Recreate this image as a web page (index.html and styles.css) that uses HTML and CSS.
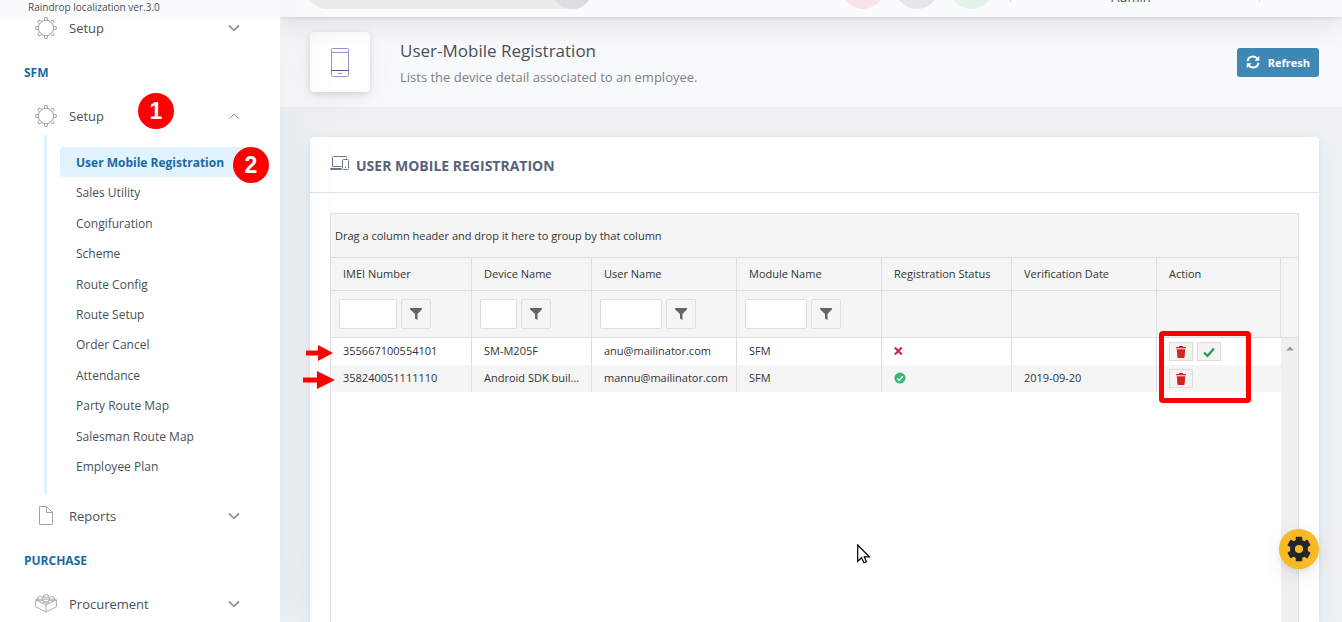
FILE: index.html
```html
<!DOCTYPE html>
<html lang="en">
<head>
<meta charset="utf-8">
<meta name="viewport" content="width=device-width, initial-scale=1">
<title>User-Mobile Registration</title>
<link rel="stylesheet" href="styles.css">
</head>
<body>
<svg class="defs" aria-hidden="true">
  <symbol id="gear-line" viewBox="0 0 22 22">
    <g fill="none" stroke="currentColor">
      <circle cx="11" cy="11" r="7.7"/>
      <path d="M9.6 3.4V.7h2.8v2.7M9.6 18.6v2.7h2.8v-2.7M3.4 9.6H.7v2.8h2.7M18.6 9.6h2.7v2.8h-2.7"/>
      <path d="M4.6 6.7 3.2 5.3l.1-1.7 1.8-.2 1.5 1.3M17.4 6.7l1.4-1.4-.1-1.7-1.8-.2-1.5 1.3M4.6 15.3l-1.4 1.4.1 1.7 1.8.2 1.5-1.3M17.4 15.3l1.4 1.4-.1 1.7-1.8.2-1.5-1.3"/>
    </g>
  </symbol>
  <symbol id="chevron" viewBox="0 0 12 8"><path d="M1 1.5 6 6.3l5-4.8" fill="none" stroke="currentColor" stroke-width="1.8"/></symbol>
  <symbol id="chevron-up" viewBox="0 0 12 8"><path d="M1.5 6.5 6 2l4.5 4.5" fill="none" stroke="currentColor"/></symbol>
  <symbol id="funnel" viewBox="0 0 14 14"><path d="M1 1h12v1.2L8.5 7v6L6 11.6V7L1 2.2z" fill="currentColor"/></symbol>
  <symbol id="trash" viewBox="0 0 12 12"><path d="M1 1h3V0h4v1h3v1.3H1zM1.8 3.2h8.4L9.6 11q-.1 1-1 1H3.400q-.9 0-1-1z" fill="currentColor"/></symbol>
</svg>
<div class="app">
  <aside class="sidebar">
    <div class="version">Raindrop localization ver.3.0</div>
    <nav class="nav">
      <a class="nav-row" href="#"><svg class="nav-icon"><use href="#gear-line"/></svg><span>Setup</span><svg class="caret"><use href="#chevron"/></svg></a>
      <h2 class="nav-heading">SFM</h2>
      <a class="nav-row" href="#"><svg class="nav-icon"><use href="#gear-line"/></svg><span>Setup</span><svg class="caret"><use href="#chevron-up"/></svg></a>
      <ul class="submenu">
        <li><a class="active" href="#">User Mobile Registration</a></li>
        <li><a href="#">Sales Utility</a></li>
        <li><a href="#">Congifuration</a></li>
        <li><a href="#">Scheme</a></li>
        <li><a href="#">Route Config</a></li>
        <li><a href="#">Route Setup</a></li>
        <li><a href="#">Order Cancel</a></li>
        <li><a href="#">Attendance</a></li>
        <li><a href="#">Party Route Map</a></li>
        <li><a href="#">Salesman Route Map</a></li>
        <li><a href="#">Employee Plan</a></li>
      </ul>
      <a class="nav-row" href="#"><svg class="nav-icon" viewBox="0 0 22 22"><path d="M4.500 1.500h7l6 6v12h-13zM11.500 1.500v6h6" fill="none" stroke="currentColor"/></svg><span>Reports</span><svg class="caret"><use href="#chevron"/></svg></a>
      <h2 class="nav-heading">PURCHASE</h2>
      <a class="nav-row" href="#"><svg class="nav-icon" viewBox="0 0 22 22"><g fill="none" stroke="currentColor" stroke-width=".9"><path d="M.6 6.800v7L11 19l10.400-5.200v-7L11 12zM11 12v7M.6 6.800l2-1M21.400 6.800l-2-1"/><ellipse cx="11" cy="3" rx="2.700" ry="1.400"/><ellipse cx="5.300" cy="5" rx="2.700" ry="1.400"/><ellipse cx="16.700" cy="5" rx="2.700" ry="1.400"/><ellipse cx="11" cy="7.500" rx="2.700" ry="1.400"/><path d="M8.300 3v1.700M13.700 3v1.700M2.600 5v2q2.500 2 5.400 0V5M14 5v2q2.900 2 5.400 0V5M8.300 7.500v2q2.700 1.600 5.400 0v-2"/></g></svg><span>Procurement</span><svg class="caret"><use href="#chevron"/></svg></a>
    </nav>
  </aside>

  <div class="content">
    <header class="topbar">
      <div class="search"><span class="search-knob"></span></div>
      <div class="dots"><span class="dot pink"></span><span class="dot grey"></span><span class="dot green"></span></div>
      <div class="account">Admin</div>
    </header>

    <section class="page-title">
      <div class="title-icon"><svg width="20" height="32" viewBox="0 0 20 32" fill="none" stroke="#9a90cc"><rect x="1.500" y="2.500" width="17" height="28" rx="1"/><path d="M1.500 6.500h17M8 27.500h4"/><path d="M1.500 24.500h17" stroke="#5d4c92"/></svg></div>
      <div class="title-text">
        <h1>User-Mobile Registration</h1>
        <p>Lists the device detail associated to an employee.</p>
      </div>
      <button class="refresh" type="button"><svg width="14" height="14" viewBox="0 0 14 14"><g fill="none" stroke="#fff" stroke-width="2"><path d="M1.500 6.200A5.500 5.500 0 0 1 11.300 3.600M12.500 7.800A5.500 5.500 0 0 1 2.700 10.400"/></g><path d="M13.300.8v5H8.500zM.7 13.200v-5h4.800z" fill="#fff"/></svg>Refresh</button>
    </section>

    <main class="main">
      <section class="panel">
        <div class="panel-head">
          <svg width="20" height="16" viewBox="0 0 20 16" fill="none" stroke="#70778a"><path d="M2.500 10.500v-9q0-1 1-1h12q1 0 1 1v1M2.500 10.500h9M.5 12.500h11M.5 12.500v1h11"/><rect x="12.500" y="3.500" width="6" height="10" rx="1"/><path d="M15 11.500h1"/></svg>
          <h2>USER MOBILE REGISTRATION</h2>
        </div>
        <div class="grid">
          <div class="group-bar">Drag a column header and drop it here to group by that column</div>
          <div class="grid-body">
            <div class="table-wrap">
            <table>
              <colgroup><col class="c-imei"><col class="c-device"><col class="c-user"><col class="c-user"><col class="c-status"><col class="c-user"><col></colgroup>
              <thead>
                <tr><th>IMEI Number</th><th>Device Name</th><th>User Name</th><th>Module Name</th><th>Registration Status</th><th>Verification Date</th><th>Action</th></tr>
                <tr class="filters">
                  <td><div class="filter"><input type="text" aria-label="Filter IMEI Number"><button type="button" aria-label="IMEI filter options"><svg><use href="#funnel"/></svg></button></div></td>
                  <td><div class="filter"><input type="text" aria-label="Filter Device Name"><button type="button" aria-label="Device filter options"><svg><use href="#funnel"/></svg></button></div></td>
                  <td><div class="filter"><input type="text" aria-label="Filter User Name"><button type="button" aria-label="User filter options"><svg><use href="#funnel"/></svg></button></div></td>
                  <td><div class="filter"><input type="text" aria-label="Filter Module Name"><button type="button" aria-label="Module filter options"><svg><use href="#funnel"/></svg></button></div></td>
                  <td></td><td></td><td></td>
                </tr>
              </thead>
              <tbody>
                <tr><td>355667100554101</td><td>SM-M205F</td><td>anu@mailinator.com</td><td>SFM</td>
                  <td><svg class="status" viewBox="0 0 12 12"><path d="m.8 2.500 7 7m0-7-7 7" stroke="#c9284f" stroke-width="2.200"/></svg></td><td></td>
                  <td><div class="actions"><button type="button" class="danger" aria-label="Delete"><svg><use href="#trash"/></svg></button><button type="button" class="ok" aria-label="Approve"><svg viewBox="0 0 12 12"><path d="m1 6.500 3.500 3.300L11 2.500" fill="none" stroke="currentColor" stroke-width="2.200"/></svg></button></div></td></tr>
                <tr><td>358240051111110</td><td>Android SDK buil...</td><td>mannu@mailinator.com</td><td>SFM</td>
                  <td><svg class="status" viewBox="0 0 12 12"><circle cx="6" cy="6" r="5.600" fill="#3cb878"/><path d="m3.200 6.200 2 2 3.700-3.900" fill="none" stroke="#fff" stroke-width="1.500"/></svg></td><td>2019-09-20</td>
                  <td><div class="actions"><button type="button" class="danger" aria-label="Delete"><svg><use href="#trash"/></svg></button></div></td></tr>
              </tbody>
            </table>
            </div>
            <div class="scroll"><div class="scroll-head"></div><div class="track"><svg width="8" height="5" viewBox="0 0 8 5"><path d="M4 0.500 8 4.500H0z" fill="#9a9a9a"/></svg></div></div>
          </div>
        </div>
      </section>
    </main>
  </div>
</div>

<button class="settings" type="button" aria-label="Settings"><svg width="28" height="28" viewBox="0 0 24 24"><path fill="#222529" stroke="#222529" stroke-linejoin="round" fill-rule="evenodd" d="M9.700 2h4.600v2.700l2.300 1.300 2.400-1.400 2.300 4-2.300 1.400v3.999l2.300 1.400-2.300 4-2.400-1.400-2.300 1.300V22H9.700v-2.700l-2.300-1.300L5 19.400l-2.300-4L5 14v-4L2.700 8.600l2.300-4L7.400 6l2.300-1.300zM12 8a4 4 0 1 0 0 8 4 4 0 0 0 0-8z"/></svg></button>
<span class="step step-one">1</span>
<span class="step step-two">2</span>
<svg class="arrow arrow-one" width="28" height="16" viewBox="0 0 28 16"><path d="M0 5.500h12V0l15 8-15 8v-5.500H0z" fill="#fe0000"/></svg>
<svg class="arrow arrow-two" width="33" height="18" viewBox="0 0 33 18"><path d="M0 6.500h14V0l18 9-18 9v-6.500H0z" fill="#fe0000"/></svg>
<div class="callout"></div>
<svg class="pointer" width="13" height="20" viewBox="0 0 13 20"><path d="M.7 1v16.300l3.800-3.500 2.500 5 2.500-1.100-2.300-4.900h5.200z" fill="#fff" stroke="#000" stroke-width="1.200"/></svg>
</body>
</html>
```
FILE: styles.css
```css
* { box-sizing: border-box; }
body {
  margin: 0;
  overflow: hidden;
  font-family: "Open Sans", "Noto Sans", sans-serif;
  font-size: 12px;
  color: #495057;
  background: #eef2f5;
}
h1, h2, p, ul { margin: 0; padding: 0; font-weight: 400; }
a { color: inherit; text-decoration: none; }
button, input { font: inherit; }
.defs { display: none; }
.app { display: grid; grid-template-columns: 280px 1fr; height: 100vh; }

/* Sidebar */
.sidebar { position: relative; z-index: 2; background: #fff; box-shadow: 7px 0 60px rgba(0, 0, 0, .05); overflow-y: clip; }
.version { height: 17px; padding-left: 28px; background: #fafbfc; font-size: 10px; line-height: 14px; }
.nav { padding: 0 24px; }
.nav-row { display: flex; align-items: center; height: 22px; padding: 0 16px 0 11px; font-size: 13px; }
.nav-row span { flex: 1; margin-left: 12px; }
.nav-icon { width: 22px; height: 22px; color: #a0a4a8; }
.caret { width: 12px; height: 8px; color: #8f9397; }
.nav-heading { margin: 24px 0 22px; font-size: 12px; line-height: 20px; font-weight: 700; color: #1a6aa3; }
.submenu {
  display: grid;
  grid-auto-rows: 1fr;
  min-height: 359px;
  margin: 8px 0 11px 20px;
  padding: 12px 0 12px 13px;
  border-left: 3px solid #e0f3ff;
  list-style: none;
}
.submenu a { display: flex; align-items: center; height: 100%; padding: 0 16px; border-radius: 4px; white-space: nowrap; }
.submenu .active { background: #e0f3ff; color: #1a6aa3; font-weight: 700; }

/* Top bar */
.content { display: flex; flex-direction: column; min-width: 0; }
.topbar {
  position: relative;
  z-index: 1;
  display: flex;
  align-items: flex-end;
  height: 17px;
  padding: 0 82px 8px 26px;
  background: #fafbfc;
  box-shadow: 0 6px 28px rgba(8, 10, 20, .13), 0 1px 4px rgba(8, 10, 20, .1);
  clip-path: inset(0 0 -60px 0);
}
.search { display: flex; justify-content: flex-end; width: 287px; height: 42px; border-radius: 21px; background: #ececed; }
.search-knob { width: 42px; height: 42px; border-radius: 50%; background: #dddddf; }
.dots { display: flex; gap: 10px; margin-left: auto; }
.dot { width: 44px; height: 44px; border-radius: 50%; }
.pink { background: #f7e3e8; }
.grey { background: #e6e6e8; }
.green { background: #e2f4ea; }
.account {
  width: 250px;
  height: 30px;
  margin: 0 0 7px 17px;
  padding: 19px 8px 0 0;
  border: solid #dcdfe2;
  border-width: 0 1px;
  font-size: 13px;
  line-height: 12px;
  text-align: center;
}

/* Page title */
.page-title {
  display: flex;
  align-items: center;
  padding: 15px 23px 15px 30px;
  background: #f8f9fb;
}
.title-icon {
  display: grid;
  place-items: center;
  width: 60px;
  height: 60px;
  border-radius: 4px;
  background: #fff;
  box-shadow: 0 8px 28px rgba(8, 10, 20, .06), 0 2px 6px rgba(8, 10, 20, .12);
}
.title-text { flex: 1; margin-left: 30px; padding-top: 4px; }
.title-text h1 { font-size: 17px; line-height: 26px; }
.title-text p { font-size: 13px; line-height: 26px; color: #7c8186; }
.refresh {
  display: flex;
  align-items: center;
  gap: 8px;
  height: 29px;
  padding: 0 9px;
  border: 0;
  border-radius: 3px;
  background: #3f87b5;
  color: #fff;
  font-size: 11px;
  font-weight: 700;
}

/* Panel */
.main { display: flex; flex: 1; min-height: 0; padding: 30px 23px 0 30px; }
.panel {
  display: flex;
  flex: 1;
  flex-direction: column;
  min-width: 0;
  border-radius: 4px 4px 0 0;
  background: #fff;
  box-shadow: 0 6px 30px rgba(8, 10, 20, .05), 0 1px 5px rgba(8, 10, 20, .06);
}
.panel-head { display: flex; align-items: center; gap: 6px; height: 56px; padding: 0 20px 2px; border-bottom: 1px solid #dfe2e6; color: #59617a; }
.panel-head h2 { padding-top: 4px; font-size: 14px; line-height: 18px; font-weight: 700; }

/* Data grid */
.grid { display: flex; flex: 1; flex-direction: column; margin: 20px 20px 0; border: 1px solid #e0e0e0; border-bottom: 0; color: #333; }
.group-bar { padding: 12px 4px; font-size: 11px; line-height: 19px; background: #f5f5f5; border-bottom: 1px solid #dedede; }
.grid-body { display: flex; flex: 1; align-items: flex-start; }
.table-wrap { flex: 1; min-width: 0; }
table { width: 100%; table-layout: fixed; border-collapse: separate; border-spacing: 0; font-size: 11px; line-height: 14px; }
.c-imei { width: 141px; }
.c-device { width: 120px; }
.c-user { width: 145px; }
.c-status { width: 130px; }
th, td { overflow: hidden; padding: 0 4px 0 12px; border-right: 1px solid #dedede; text-align: left; text-overflow: ellipsis; white-space: nowrap; }
thead th, thead td { background: #f5f5f5; border-bottom: 1px solid #dedede; }
th { height: 33px; font-weight: 500; }
.filters td { height: 47px; padding: 0 8px; }
.filter { display: flex; gap: 4px; padding-right: 32px; }
.filter input { flex: 1; min-width: 0; height: 30px; border: 1px solid #dedede; border-radius: 2px; background: #fff; }
.filter button { display: grid; place-items: center; width: 30px; height: 30px; padding: 0; border: 1px solid #dedede; border-radius: 2px; background: #f5f5f5; color: #656565; }
.filter svg { width: 14px; height: 14px; }
tbody td { height: 27px; padding-bottom: 1px; }
tbody td:last-child { padding-bottom: 0; border-right: 0; }
tbody tr:nth-child(even) td { background: #f5f5f5; }
.status { display: block; width: 12px; height: 12px; }
.actions { display: flex; gap: 4px; }
.actions button { display: grid; place-items: center; width: 24px; height: 19px; padding: 0; border: 1px solid #dcdcdc; background: #f5f2f2; }
.actions svg { width: 12px; height: 12px; }
.danger { color: #cf2525; }
.ok { color: #209a5b; }
.scroll { display: flex; flex-direction: column; align-self: stretch; width: 17px; }
.scroll-head { height: 80px; background: #f5f5f5; border-bottom: 1px solid #dedede; }
.track { flex: 1; background: #f0f0f0; text-align: center; }

/* Floating layer */
.settings {
  position: fixed;
  right: 23px;
  bottom: 53px;
  z-index: 3;
  display: grid;
  place-items: center;
  width: 40px;
  height: 40px;
  padding: 0;
  border: 0;
  border-radius: 50%;
  background: #f7b924;
  box-shadow: 0 6px 24px rgba(8, 10, 20, .08), 0 3px 6px rgba(8, 10, 20, .08);
}
.step {
  position: absolute;
  z-index: 3;
  width: 36px;
  height: 36px;
  border-radius: 50%;
  background: #fe0000;
  color: #fff;
  font: 700 23px/36px "Liberation Sans", Arial, sans-serif;
  text-align: center;
}
.step-one { left: 138px; top: 93px; }
.step-two { left: 233px; top: 147px; }
.arrow, .pointer { position: absolute; z-index: 3; }
.arrow-one { left: 306px; top: 345px; }
.arrow-two { left: 303px; top: 371px; }
.pointer { left: 857px; top: 544px; }
.callout { position: absolute; z-index: 3; left: 1159px; top: 331px; width: 92px; height: 72px; border: 5px solid #fe0000; border-radius: 4px; }
```
